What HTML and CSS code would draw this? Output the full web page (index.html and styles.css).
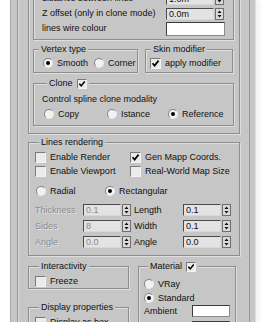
FILE: index.html
```html
<!DOCTYPE html>
<html>
<head>
<meta charset="utf-8">
<link rel="stylesheet" href="styles.css">
</head>
<body>
<div class="panel">
  <div class="rollout">
    <div class="group g-outer">
      <div class="box box-a">
        <div class="frow"><span class="flabel">distance between lines</span><span class="inp w48">1.0m</span><svg class="spin" viewBox="0 0 9 12"><rect x="0.5" y="0.5" width="8" height="11" fill="#dadada" stroke="#6e6e6e"/><path d="M2.5 5L4.5 2.5L6.5 5ZM2.5 7L4.5 9.5L6.5 7Z" fill="#111"/></svg></div>
        <div class="frow"><span class="flabel">Z offset (only in clone mode)</span><span class="inp w48">0.0m</span><svg class="spin" viewBox="0 0 9 12"><rect x="0.5" y="0.5" width="8" height="11" fill="#dadada" stroke="#6e6e6e"/><path d="M2.5 5L4.5 2.5L6.5 5ZM2.5 7L4.5 9.5L6.5 7Z" fill="#111"/></svg></div>
        <div class="frow"><span class="flabel">lines wire colour</span><span class="swatch w59"></span></div>
      </div>
      <div class="pair">
        <div class="box vtype">
          <div class="gtitle">Vertex type</div>
          <div class="optrow pad9">
            <span class="opt w51"><span class="radio on"></span>Smooth</span>
            <span class="opt"><span class="radio"></span>Corner</span>
          </div>
        </div>
        <div class="box skin">
          <div class="gtitle">Skin modifier</div>
          <div class="optrow pad4">
            <span class="opt"><span class="check"><svg viewBox="0 0 9 9"><path d="M1.5 4.2L3.6 6.6L7.6 1.6" fill="none" stroke="#000" stroke-width="1.7"/></svg></span>apply modifier</span>
          </div>
        </div>
      </div>
      <div class="box clone">
        <div class="gtitle">Clone<span class="check"><svg viewBox="0 0 9 9"><path d="M1.5 4.2L3.6 6.6L7.6 1.6" fill="none" stroke="#000" stroke-width="1.7"/></svg></span></div>
        <div class="ctext">Control spline clone modality</div>
        <div class="optrow pad10 cradios">
          <span class="opt w63"><span class="radio"></span>Copy</span>
          <span class="opt w61"><span class="radio"></span>Istance</span>
          <span class="opt"><span class="radio on"></span>Reference</span>
        </div>
      </div>
    </div>

    <div class="group lines">
      <div class="gtitle">Lines rendering</div>
      <div class="optrow r1">
        <span class="opt w95"><span class="check"></span>Enable Render</span>
        <span class="opt"><span class="check"><svg viewBox="0 0 9 9"><path d="M1.5 4.2L3.6 6.6L7.6 1.6" fill="none" stroke="#000" stroke-width="1.7"/></svg></span>Gen Mapp Coords.</span>
      </div>
      <div class="optrow r2">
        <span class="opt w95"><span class="check"></span>Enable Viewport</span>
        <span class="opt"><span class="check"></span>Real-World Map Size</span>
      </div>
      <div class="optrow r3">
        <span class="opt w69"><span class="radio"></span>Radial</span>
        <span class="opt"><span class="radio on"></span>Rectangular</span>
      </div>
      <div class="srow first">
        <span class="scol"><span class="slabel dis">Thickness</span><span class="inp w38 dis">0.1</span><svg class="spin" viewBox="0 0 9 12"><rect x="0.5" y="0.5" width="8" height="11" fill="#dadada" stroke="#6e6e6e"/><path d="M2.5 5L4.5 2.5L6.5 5ZM2.5 7L4.5 9.5L6.5 7Z" fill="#111"/></svg></span>
        <span class="scol col2"><span class="slabel l2">Length</span><span class="inp w38">0.1</span><svg class="spin" viewBox="0 0 9 12"><rect x="0.5" y="0.5" width="8" height="11" fill="#dadada" stroke="#6e6e6e"/><path d="M2.5 5L4.5 2.5L6.5 5ZM2.5 7L4.5 9.5L6.5 7Z" fill="#111"/></svg></span>
      </div>
      <div class="srow">
        <span class="scol"><span class="slabel dis">Sides</span><span class="inp w38 dis">8</span><svg class="spin" viewBox="0 0 9 12"><rect x="0.5" y="0.5" width="8" height="11" fill="#dadada" stroke="#6e6e6e"/><path d="M2.5 5L4.5 2.5L6.5 5ZM2.5 7L4.5 9.5L6.5 7Z" fill="#111"/></svg></span>
        <span class="scol col2"><span class="slabel l2">Width</span><span class="inp w38">0.1</span><svg class="spin" viewBox="0 0 9 12"><rect x="0.5" y="0.5" width="8" height="11" fill="#dadada" stroke="#6e6e6e"/><path d="M2.5 5L4.5 2.5L6.5 5ZM2.5 7L4.5 9.5L6.5 7Z" fill="#111"/></svg></span>
      </div>
      <div class="srow">
        <span class="scol"><span class="slabel dis">Angle</span><span class="inp w38 dis">0.0</span><svg class="spin" viewBox="0 0 9 12"><rect x="0.5" y="0.5" width="8" height="11" fill="#dadada" stroke="#6e6e6e"/><path d="M2.5 5L4.5 2.5L6.5 5ZM2.5 7L4.5 9.5L6.5 7Z" fill="#111"/></svg></span>
        <span class="scol col2"><span class="slabel l2">Angle</span><span class="inp w38">0.0</span><svg class="spin" viewBox="0 0 9 12"><rect x="0.5" y="0.5" width="8" height="11" fill="#dadada" stroke="#6e6e6e"/><path d="M2.5 5L4.5 2.5L6.5 5ZM2.5 7L4.5 9.5L6.5 7Z" fill="#111"/></svg></span>
      </div>
    </div>

    <div class="bottom">
      <div class="leftcol">
        <div class="group inter">
          <div class="gtitle">Interactivity</div>
          <div class="optrow r1">
            <span class="opt"><span class="check"></span>Freeze</span>
          </div>
        </div>
        <div class="group disp">
          <div class="gtitle">Display properties</div>
          <div class="optrow r1">
            <span class="opt"><span class="check"></span>Display as box</span>
          </div>
        </div>
      </div>
      <div class="group mat">
        <div class="gtitle">Material<span class="check"><svg viewBox="0 0 9 9"><path d="M1.5 4.2L3.6 6.6L7.6 1.6" fill="none" stroke="#000" stroke-width="1.7"/></svg></span></div>
        <div class="optrow m1"><span class="opt"><span class="radio"></span>VRay</span></div>
        <div class="optrow m2"><span class="opt"><span class="radio on"></span>Standard</span></div>
        <div class="mrow"><span class="mlabel">Ambient</span><span class="swatch w38"></span></div>
        <div class="mrow m4"><span class="mlabel">Diffuse</span><span class="swatch w38"></span></div>
      </div>
    </div>
  </div>
</div>
</body>
</html>
```

FILE: styles.css
```css
* { box-sizing: border-box; }
html, body { margin: 0; padding: 0; }
body {
  width: 267px;
  height: 322px;
  overflow: hidden;
  background: #fff;
  font-family: "Liberation Sans", Arial, sans-serif;
  font-size: 9px;
  line-height: 11px;
  color: #101010;
}
.panel {
  margin-left: 10px;
  width: 246px;
  height: 322px;
  background: #c6c6c6;
  border-left: 1px solid #a9a9a9;
  border-right: 1px solid #dedede;
  padding: 0 5px 0 6px;
  box-shadow: 3px 0 5px rgba(0,0,0,0.06);
  overflow: hidden;
}
.rollout {
  width: 233px;
  height: 360px;
  margin-top: -22px;
  border-left: 1px solid #979797;
  border-right: 1px solid #979797;
  box-shadow: inset 1px 0 0 #dadada;
  padding: 0 9px 0 10px;
}
.group, .box {
  border: 1px solid #8e8e8e;
  box-shadow: inset 1px 1px 0 #dedede, 1px 1px 0 #dedede;
}
.gtitle {
  display: flex;
  align-items: center;
  gap: 4px;
  width: max-content;
  height: 11px;
  margin: -6px 0 0 4px;
  padding: 0 2px;
  background: #c6c6c6;
}
.box .gtitle { margin-left: 5px; }

/* outer group */
.g-outer { padding: 0 5px 7px 4px; }
.box-a { margin-top: 5px; padding: 6px 0 3px 8px; }
.frow { display: flex; align-items: center; height: 15px; }
.flabel { width: 124px; flex: none; white-space: nowrap; }
.inp {
  display: block;
  flex: none;
  height: 12px;
  background: #e3e3e3;
  border: 1px solid;
  border-color: #4b4b4b #d8d8d8 #d8d8d8 #4b4b4b;
  padding-left: 2px;
  line-height: 10px;
  color: #101010;
}
.inp.dis { color: #8a8a8a; }
.w48 { width: 48px; }
.w38 { width: 38px; }
.w59 { width: 59px; }
.spin { display: block; flex: none; width: 9px; height: 12px; margin-left: 1px; }
.swatch {
  display: block;
  flex: none;
  height: 14px;
  background: #fff;
  border: 1px solid;
  border-color: #3c3c3c #8a8a8a #8a8a8a #3c3c3c;
}

.pair { display: flex; gap: 7px; margin-top: 9px; }
.vtype { width: 105px; padding-bottom: 3px; }
.skin { width: 88px; padding-bottom: 3px; }
.optrow { display: flex; align-items: center; height: 12px; }
.vtype .optrow, .skin .optrow { margin-top: 2px; }
.pad9 { padding-left: 9px; }
.pad4 { padding-left: 4px; }
.opt { display: flex; align-items: center; gap: 4px; flex: none; white-space: nowrap; }
.w51 { width: 51px; }
.w63 { width: 63px; }
.w61 { width: 61px; }
.w95 { width: 95px; }
.w69 { width: 69px; }

.radio {
  display: block;
  flex: none;
  position: relative;
  width: 10px;
  height: 10px;
  border-radius: 50%;
  background: #f2f2f2;
  border: 1px solid;
  border-color: #858585 #e9e9e9 #e9e9e9 #858585;
}
.radio.on::after {
  content: "";
  position: absolute;
  left: 2px;
  top: 2px;
  width: 4px;
  height: 4px;
  border-radius: 50%;
  background: #000;
}
.check {
  display: block;
  flex: none;
  width: 11px;
  height: 11px;
  background: #ebebeb;
  border: 1px solid;
  border-color: #7a7a7a #f3f3f3 #f3f3f3 #7a7a7a;
}
.check svg { display: block; width: 9px; height: 9px; }
.gtitle .check { width: 10px; height: 10px; }
.gtitle .check svg { width: 8px; height: 8px; }

.clone { margin-top: 10px; padding: 0 0 5px 8px; }
.ctext { margin-top: 5px; height: 11px; white-space: nowrap; }
.cradios { margin-top: 3px; padding-left: 2px; }

/* lines rendering */
.lines { margin-top: 8px; padding: 0 0 6px 6px; }
.lines .r1 { margin-top: 3px; }
.lines .r2 { margin-top: 2px; }
.lines .r3 { margin-top: 8px; padding-left: 1px; }
.srow { display: flex; align-items: center; height: 14px; margin-top: 2px; }
.srow.first { margin-top: 6px; }
.scol { display: flex; align-items: center; flex: none; }
.col2 { margin-left: 3px; }
.slabel { width: 48px; flex: none; }
.slabel.l2 { width: 49px; }
.dis { color: #8d8d8d; text-shadow: 1px 1px 0 #e2e2e2; }
.inp.dis { text-shadow: none; }

/* bottom */
.bottom { display: flex; gap: 9px; margin-top: 10px; align-items: flex-start; }
.leftcol { width: 101px; flex: none; }
.inter { padding: 0 0 1px 6px; }
.inter .r1 { margin-top: 3px; }
.disp { margin-top: 18px; padding: 0 0 6px 6px; }
.disp .r1 { margin-top: 3px; }
.mat { width: 98px; flex: none; padding: 0 0 6px 5px; }
.mat .m1 { margin-top: 6px; }
.mat .m2 { margin-top: 2px; }
.mrow { display: flex; align-items: center; height: 14px; }
.mrow.m4 { margin-top: 2px; }
.mlabel { width: 48px; flex: none; }
.mrow .swatch { height: 12px; }
```
